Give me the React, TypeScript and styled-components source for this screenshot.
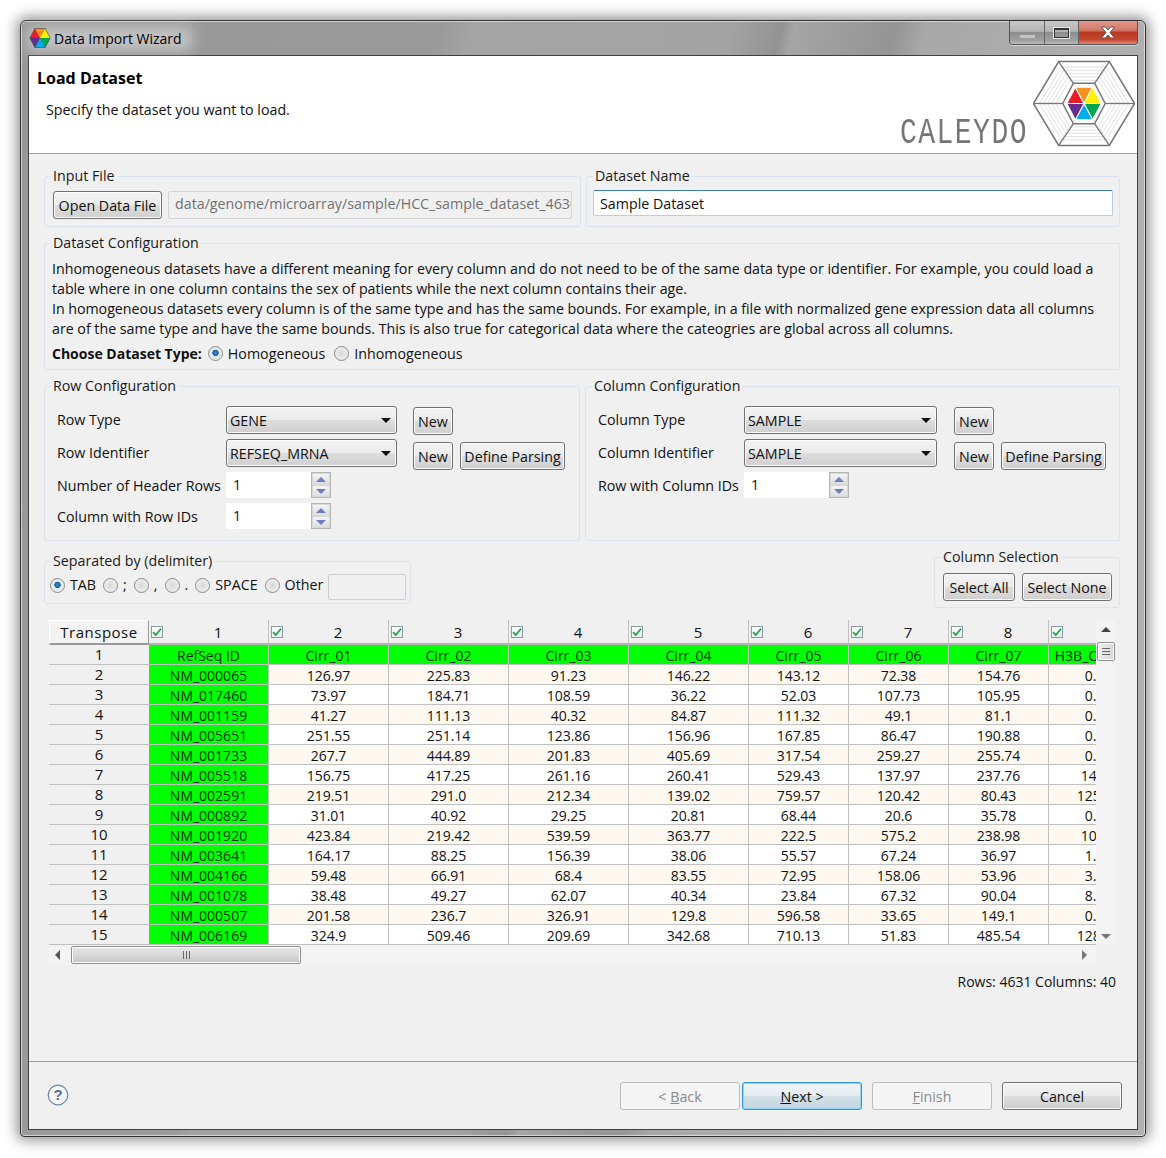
import React from "react";
import styled, { createGlobalStyle } from "styled-components";

const GlobalStyle = createGlobalStyle`
  body {
    margin: 0;
    background: #fff;
    font-family: "Open Sans", "Noto Sans", sans-serif;
    font-size: 14.25px;
    color: #111;
  }
`;

const columns = ["RefSeq ID", "Cirr_01", "Cirr_02", "Cirr_03", "Cirr_04", "Cirr_05", "Cirr_06", "Cirr_07", "H3B_Cirr_012"];

const rows = [
  ["NM_000065", "126.97", "225.83", "91.23", "146.22", "143.12", "72.38", "154.76", "0.17"],
  ["NM_017460", "73.97", "184.71", "108.59", "36.22", "52.03", "107.73", "105.95", "0.26"],
  ["NM_001159", "41.27", "111.13", "40.32", "84.87", "111.32", "49.1", "81.1", "0.31"],
  ["NM_005651", "251.55", "251.14", "123.86", "156.96", "167.85", "86.47", "190.88", "0.52"],
  ["NM_001733", "267.7", "444.89", "201.83", "405.69", "317.54", "259.27", "255.74", "0.48"],
  ["NM_005518", "156.75", "417.25", "261.16", "260.41", "529.43", "137.97", "237.76", "14.38"],
  ["NM_002591", "219.51", "291.0", "212.34", "139.02", "759.57", "120.42", "80.43", "125.38"],
  ["NM_000892", "31.01", "40.92", "29.25", "20.81", "68.44", "20.6", "35.78", "0.71"],
  ["NM_001920", "423.84", "219.42", "539.59", "363.77", "222.5", "575.2", "238.98", "10.62"],
  ["NM_003641", "164.17", "88.25", "156.39", "38.06", "55.57", "67.24", "36.97", "1.20"],
  ["NM_004166", "59.48", "66.91", "68.4", "83.55", "72.95", "158.06", "53.96", "3.90"],
  ["NM_001078", "38.48", "49.27", "62.07", "40.34", "23.84", "67.32", "90.04", "8.14"],
  ["NM_000507", "201.58", "236.7", "326.91", "129.8", "596.58", "33.65", "149.1", "0.63"],
  ["NM_006169", "324.9", "509.46", "209.69", "342.68", "710.13", "51.83", "485.54", "128.04"],
];

const hexPoints = (cx: number, cy: number, rx: number, ry: number) =>
  [
    [cx - rx, cy],
    [cx - rx / 2, cy - ry],
    [cx + rx / 2, cy - ry],
    [cx + rx, cy],
    [cx + rx / 2, cy + ry],
    [cx - rx / 2, cy + ry],
  ]
    .map((p) => p.join(","))
    .join(" ");

const HexLogo: React.FC<{ small?: boolean }> = ({ small }) => {
  const colors = ["#ed1c24", "#f7941d", "#fff200", "#00a651", "#00aeef", "#662d91"];
  const cx = 50;
  const cy = 43;
  const core = [
    [cx - 17, cy],
    [cx - 8.5, cy - 16],
    [cx + 8.5, cy - 16],
    [cx + 17, cy],
    [cx + 8.5, cy + 16],
    [cx - 8.5, cy + 16],
  ];
  if (small) {
    return (
      <svg width="22" height="20" viewBox="30 24 40 38">
        <polygon points={hexPoints(cx, cy, 20, 19)} fill="#555" />
        {colors.map((c, i) => (
          <polygon
            key={c}
            points={`${cx},${cy} ${core[i].map((v, k) => (v - (k ? cy : cx)) * 1.1 + (k ? cy : cx)).join(",")} ${core[(i + 1) % 6]
              .map((v, k) => (v - (k ? cy : cx)) * 1.1 + (k ? cy : cx))
              .join(",")}`}
            fill={c}
          />
        ))}
      </svg>
    );
  }
  return (
    <svg width="102" height="87" viewBox="0 0 100 86">
      {[28, 32, 36, 40, 44].map((r) => (
        <polygon key={r} points={hexPoints(cx, cy, r, r * 0.82)} fill="none" stroke="#dcdcdc" strokeWidth="0.9" />
      ))}
      <polygon points={hexPoints(cx, cy, 50, 41.5)} fill="none" stroke="#767676" strokeWidth="1.5" />
      <polygon points={hexPoints(cx, cy, 21, 20)} fill="#fff" stroke="#767676" strokeWidth="1.5" />
      <line x1={cx - 50} y1={cy} x2={cx - 21} y2={cy} stroke="#767676" strokeWidth="1.3" />
      <line x1={cx + 21} y1={cy} x2={cx + 50} y2={cy} stroke="#767676" strokeWidth="1.3" />
      <line x1={cx - 25} y1={cy - 41.5} x2={cx - 10.5} y2={cy - 20} stroke="#767676" strokeWidth="1.3" />
      <line x1={cx + 25} y1={cy - 41.5} x2={cx + 10.5} y2={cy - 20} stroke="#767676" strokeWidth="1.3" />
      <line x1={cx - 25} y1={cy + 41.5} x2={cx - 10.5} y2={cy + 20} stroke="#767676" strokeWidth="1.3" />
      <line x1={cx + 25} y1={cy + 41.5} x2={cx + 10.5} y2={cy + 20} stroke="#767676" strokeWidth="1.3" />
      {colors.map((c, i) => (
        <polygon
          key={c}
          points={`${cx},${cy} ${core[i].join(",")} ${core[(i + 1) % 6].join(",")}`}
          fill={c}
          stroke="#fff"
          strokeWidth="1"
        />
      ))}
    </svg>
  );
};

const Check = () => (
  <CheckBox>
    <svg width="10" height="10" viewBox="0 0 10 10">
      <path d="M1 5.2 L3.8 8 L9 1.8" fill="none" stroke="#1c9a3c" strokeWidth="1.6" />
    </svg>
  </CheckBox>
);

const Spinner: React.FC<{ value: string }> = ({ value }) => (
  <SpinBox>
    <SpinValue>{value}</SpinValue>
    <SpinButtons>
      <SpinButton>
        <ArrowUp />
      </SpinButton>
      <SpinButton>
        <ArrowDown />
      </SpinButton>
    </SpinButtons>
  </SpinBox>
);

const Radio: React.FC<{ checked?: boolean; label: string }> = ({ checked, label }) => (
  <RadioItem>
    <RadioDot $checked={checked} />
    {label}
  </RadioItem>
);

const App: React.FC = () => {
  return (
    <>
      <GlobalStyle />
      <Page>
        <Win>
          <TitleBar>
            <TitleLeft>
              <HexLogo small />
              <TitleText>Data Import Wizard</TitleText>
            </TitleLeft>
            <Controls>
              <CtrlMin>
                <MinBar />
              </CtrlMin>
              <CtrlMax>
                <MaxBox />
              </CtrlMax>
              <CtrlClose>
                <svg width="16" height="13" viewBox="0 0 16 13">
                  <path
                    d="M1.5 1 H5.5 L8 4 L10.5 1 H14.5 L10 6.5 L14.5 12 H10.5 L8 9 L5.5 12 H1.5 L6 6.5 Z"
                    fill="#fff"
                    stroke="#555"
                    strokeWidth="1"
                  />
                </svg>
              </CtrlClose>
            </Controls>
          </TitleBar>

          <Content>
            <Header>
              <HeaderText>
                <HeaderTitle>Load Dataset</HeaderTitle>
                <HeaderDesc>Specify the dataset you want to load.</HeaderDesc>
              </HeaderText>
              <LogoGroup>
                <LogoWord>CALEYDO</LogoWord>
                <HexLogo />
              </LogoGroup>
            </Header>

            <Main>
              <TwoCols $left={537}>
                <Group $height={60}>
                  <Legend>Input File</Legend>
                  <InputFileRow>
                    <Button $w={109}>Open Data File</Button>
                    <DisabledInput>data/genome/microarray/sample/HCC_sample_dataset_4630</DisabledInput>
                  </InputFileRow>
                </Group>
                <Group $height={60}>
                  <Legend>Dataset Name</Legend>
                  <NameRow>
                    <NameInput>Sample Dataset</NameInput>
                  </NameRow>
                </Group>
              </TwoCols>

              <ConfigGroup>
                <Legend>Dataset Configuration</Legend>
                <ConfigText>
                  <Line>
                    Inhomogeneous datasets have a different meaning for every column and do not need to be of the same data type or identifier. For example, you could load a
                  </Line>
                  <Line $ls={-0.05}>table where in one column contains the sex of patients while the next column contains their age.</Line>
                  <Line $ls={-0.05}>
                    In homogeneous datasets every column is of the same type and has the same bounds. For example, in a file with normalized gene expression data all columns
                  </Line>
                  <Line $ls={-0.02}>
                    are of the same type and have the same bounds. This is also true for categorical data where the cateogries are global across all columns.
                  </Line>
                  <TypeRow>
                    <strong>Choose Dataset Type:</strong>
                    <Radio checked label="Homogeneous" />
                    <Radio label="Inhomogeneous" />
                  </TypeRow>
                </ConfigText>
              </ConfigGroup>

              <ConfigCols>
                <Group $height={164}>
                  <Legend>Row Configuration</Legend>
                  <ConfigBody>
                    <FormRow $h={33}>
                      <FormLabel $w={169}>Row Type</FormLabel>
                      <Combo $w={171}>
                        GENE
                        <ComboArrow />
                      </Combo>
                      <NewSlot $top={1} $ml={16}>
                        <Button $w={40}>New</Button>
                      </NewSlot>
                    </FormRow>
                    <FormRow $h={33}>
                      <FormLabel $w={169}>Row Identifier</FormLabel>
                      <Combo $w={171}>
                        REFSEQ_MRNA
                        <ComboArrow />
                      </Combo>
                      <NewSlot $top={3} $ml={16}>
                        <Button $w={40}>New</Button>
                        <Button $w={105}>Define Parsing</Button>
                      </NewSlot>
                    </FormRow>
                    <FormRow $h={31}>
                      <FormLabel $w={169}>Number of Header Rows</FormLabel>
                      <Spinner value="1" />
                    </FormRow>
                    <FormRow $h={31}>
                      <FormLabel $w={169}>Column with Row IDs</FormLabel>
                      <Spinner value="1" />
                    </FormRow>
                  </ConfigBody>
                </Group>
                <Group $height={164}>
                  <Legend>Column Configuration</Legend>
                  <ConfigBody>
                    <FormRow $h={33}>
                      <FormLabel $w={146}>Column Type</FormLabel>
                      <Combo $w={193}>
                        SAMPLE
                        <ComboArrow />
                      </Combo>
                      <NewSlot $top={1} $ml={17}>
                        <Button $w={40}>New</Button>
                      </NewSlot>
                    </FormRow>
                    <FormRow $h={33}>
                      <FormLabel $w={146}>Column Identifier</FormLabel>
                      <Combo $w={193}>
                        SAMPLE
                        <ComboArrow />
                      </Combo>
                      <NewSlot $top={3} $ml={17}>
                        <Button $w={40}>New</Button>
                        <Button $w={105}>Define Parsing</Button>
                      </NewSlot>
                    </FormRow>
                    <FormRow $h={31}>
                      <FormLabel $w={146}>Row with Column IDs</FormLabel>
                      <Spinner value="1" />
                    </FormRow>
                  </ConfigBody>
                </Group>
              </ConfigCols>

              <OptionsRow>
                <SeparatedGroup>
                  <Legend>Separated by (delimiter)</Legend>
                  <DelimiterRow>
                    <Radio checked label="TAB" />
                    <Radio label=";" />
                    <Radio label="," />
                    <Radio label="." />
                    <Radio label="SPACE" />
                    <Radio label="Other" />
                    <OtherInput />
                  </DelimiterRow>
                </SeparatedGroup>
                <SelectionGroup>
                  <Legend>Column Selection</Legend>
                  <SelectionRow>
                    <Button $w={72}>Select All</Button>
                    <Button $w={90}>Select None</Button>
                  </SelectionRow>
                </SelectionGroup>
              </OptionsRow>

              <TableWrap>
                <TableClip>
                  <TableGrid>
                    <Corner>Transpose</Corner>
                    {columns.map((_, i) => (
                      <ColHead key={i}>
                        <Check />
                        <ColNumber>{i + 1}</ColNumber>
                      </ColHead>
                    ))}
                    <RowHead>1</RowHead>
                    {columns.map((c) => (
                      <Cell key={c} $green>
                        {c}
                      </Cell>
                    ))}
                    {rows.map((row, r) => (
                      <React.Fragment key={row[0]}>
                        <RowHead>{r + 2}</RowHead>
                        {row.map((v, c) => (
                          <Cell key={c} $green={c === 0} $alt={r % 2 === 0}>
                            {v}
                          </Cell>
                        ))}
                      </React.Fragment>
                    ))}
                  </TableGrid>
                </TableClip>
                <VScroll>
                  <ArrowUpDark />
                  <VThumb>
                    <GripLine />
                    <GripLine />
                    <GripLine />
                  </VThumb>
                  <VSpacer />
                  <ArrowDownDark />
                </VScroll>
                <HScroll>
                  <ArrowLeftDark />
                  <HThumb>
                    <VGripLine />
                    <VGripLine />
                    <VGripLine />
                  </HThumb>
                  <VSpacer />
                  <ArrowRightDark />
                </HScroll>
              </TableWrap>

              <Status>Rows: 4631 Columns: 40</Status>
            </Main>

            <Footer>
              <HelpIcon>
                <svg width="22" height="22" viewBox="0 0 22 22">
                  <circle cx="11" cy="11" r="9.8" fill="#f6f7f9" stroke="#6b83a5" strokeWidth="1.2" />
                  <text x="11" y="16" textAnchor="middle" fontFamily="Liberation Sans" fontWeight="bold" fontSize="15" fill="#566e92">
                    ?
                  </text>
                </svg>
              </HelpIcon>
              <WizardButtons>
                <WizardButton $disabled>
                  &lt; <u>B</u>ack
                </WizardButton>
                <WizardButton $primary>
                  <u>N</u>ext &gt;
                </WizardButton>
                <WizardButton $disabled $ml={8}>
                  <u>F</u>inish
                </WizardButton>
                <WizardButton $ml={8}>Cancel</WizardButton>
              </WizardButtons>
            </Footer>
          </Content>
        </Win>
      </Page>
    </>
  );
};

const Page = styled.div`
  padding: 20px;
  height: 1158px;
  box-sizing: border-box;
  overflow: hidden;
`;

const Win = styled.div`
  width: 1126px;
  height: 1117px;
  box-sizing: border-box;
  display: flex;
  flex-direction: column;
  padding: 0 7px 6px;
  border: 1px solid #303030;
  border-radius: 6px 6px 4px 4px;
  background: linear-gradient(
    104deg,
    #989898 0,
    #9a9a9a 410px,
    #a4a4a4 440px,
    #a3a3a3 690px,
    #939393 740px,
    #a5a5a5 752px,
    #949494 850px,
    #a8a8a8 880px,
    #b0b0b0 1126px
  );
  box-shadow: 0 0 14px 3px rgba(0, 0, 0, 0.45), inset 0 0 0 1px rgba(255, 255, 255, 0.55);
`;

const TitleBar = styled.div`
  height: 34px;
  flex: none;
  display: flex;
  justify-content: space-between;
  align-items: flex-start;
`;

const TitleLeft = styled.div`
  display: flex;
  align-items: center;
  gap: 3px;
  height: 34px;
  margin-left: 1px;
  position: relative;
  &::before {
    content: "";
    position: absolute;
    left: -2px;
    right: -10px;
    top: 5px;
    bottom: 4px;
    background: rgba(255, 255, 255, 0.42);
    filter: blur(7px);
  }
  & > * {
    position: relative;
  }
`;

const TitleText = styled.span`
  font-size: 14px;
  color: #000;
`;

const Controls = styled.div`
  display: flex;
  height: 23px;
  border: 1px solid #555;
  border-top: none;
  border-radius: 0 0 4px 4px;
  overflow: hidden;
  box-shadow: 0 1px 0 rgba(255, 255, 255, 0.5);
`;

const CtrlMin = styled.div`
  width: 34px;
  display: flex;
  align-items: center;
  justify-content: center;
  border-right: 1px solid #666;
  background: linear-gradient(#c8c8c8, #b4b4b4 45%, #8e8e8e 50%, #a0a0a0 85%, #bbb);
`;

const MinBar = styled.div`
  width: 15px;
  height: 3px;
  margin-top: 7px;
  background: #c4c4c4;
`;

const CtrlMax = styled(CtrlMin)`
  width: 33px;
`;

const MaxBox = styled.div`
  width: 13px;
  height: 7px;
  background: transparent;
  border: 1px solid #333;
  border-top-width: 2px;
  outline: 1px solid #e8e8e8;
`;

const CtrlClose = styled.div`
  width: 58px;
  display: flex;
  align-items: center;
  justify-content: center;
  background: linear-gradient(#e3968a, #d1796a 40%, #b93a22 50%, #c5452c 80%, #dd8a78);
`;

const Content = styled.div`
  flex: 1;
  min-height: 0;
  display: flex;
  flex-direction: column;
  border: 1px solid #404040;
  background: #f0f0f0;
`;

const Header = styled.div`
  height: 98px;
  flex: none;
  box-sizing: border-box;
  background: #fff;
  border-bottom: 1px solid #a0a0a0;
  display: flex;
  justify-content: space-between;
  padding: 0 2px 0 8px;
`;

const HeaderText = styled.div`
  display: flex;
  flex-direction: column;
`;

const HeaderTitle = styled.div`
  font-weight: 700;
  font-size: 16px;
  line-height: 22px;
  margin-top: 11px;
  color: #000;
`;

const HeaderDesc = styled.div`
  line-height: 20px;
  margin: 11px 0 0 9px;
`;

const LogoGroup = styled.div`
  display: flex;
  align-items: flex-end;
  padding-bottom: 6px;
`;

const LogoWord = styled.span`
  display: inline-block;
  font-family: "Liberation Mono", monospace;
  font-size: 28px;
  line-height: 24px;
  letter-spacing: 1.5px;
  color: #757575;
  margin: 0 5px -2px 0;
  transform: scaleY(1.3);
  transform-origin: center bottom;
`;

const Main = styled.div`
  flex: 1;
  min-height: 0;
  padding: 13px 17px 0 15px;
`;

const TwoCols = styled.div<{ $left: number }>`
  display: grid;
  grid-template-columns: ${({ $left }) => $left}px 1fr;
  column-gap: 5px;
`;

const Group = styled.fieldset<{ $height: number }>`
  margin: 0;
  padding: 0;
  min-width: 0;
  box-sizing: border-box;
  height: ${({ $height }) => $height}px;
  border: 1px solid #dbe4ee;
  border-radius: 3px;
`;

const Legend = styled.legend`
  margin-left: 6px;
  padding: 0 2px;
  line-height: 18px;
  color: #1a1a1a;
`;

const InputFileRow = styled.div`
  display: flex;
  gap: 6px;
  padding: 6px 0 0 8px;
`;

const Button = styled.div<{ $w: number }>`
  width: ${({ $w }) => $w}px;
  height: 28px;
  flex: none;
  box-sizing: border-box;
  display: flex;
  align-items: center;
  justify-content: center;
  white-space: nowrap;
  border: 1px solid #707070;
  border-radius: 3px;
  box-shadow: inset 0 0 0 1px #fbfbfb;
  background: linear-gradient(#f3f3f3, #ebebeb 48%, #dddddd 52%, #cfcfcf);
`;

const DisabledInput = styled.div`
  width: 404px;
  height: 28px;
  box-sizing: border-box;
  border: 1px solid #d5d5d5;
  border-radius: 2px;
  padding: 0 2px 0 6px;
  line-height: 24px;
  color: #707070;
  overflow: hidden;
  white-space: nowrap;
`;

const NameRow = styled.div`
  padding: 5px 6px 0 6px;
`;

const NameInput = styled.div`
  height: 26px;
  box-sizing: border-box;
  background: #fff;
  border: 1px solid #b5cfe7;
  border-top-color: #3d7bad;
  border-radius: 2px;
  padding-left: 6px;
  line-height: 25px;
`;

const ConfigGroup = styled(Group).attrs({ $height: 136 })`
  margin-top: 7px;
`;

const ConfigText = styled.div`
  padding: 7px 7px 0;
`;

const Line = styled.div<{ $ls?: number }>`
  line-height: 20px;
  white-space: nowrap;
  letter-spacing: ${({ $ls }) => $ls ?? 0}px;
`;

const TypeRow = styled.div`
  display: flex;
  align-items: center;
  gap: 9px;
  margin-top: 4px;
  height: 20px;
  & > strong {
    font-weight: 700;
    font-size: 14px;
    margin-right: -3px;
  }
`;

const RadioItem = styled.span`
  display: inline-flex;
  align-items: center;
  gap: 5px;
  white-space: nowrap;
`;

const RadioDot = styled.span<{ $checked?: boolean }>`
  width: 15px;
  height: 15px;
  flex: none;
  box-sizing: border-box;
  border-radius: 50%;
  border: 1px solid #8a8a8a;
  background: ${({ $checked }) =>
    $checked
      ? "radial-gradient(circle at 50% 45%, #3a8fd0 0, #1b5f9f 30%, #dfe8f0 36%, #f4f4f4 100%)"
      : "radial-gradient(circle, #d8d8d8 0, #e6e6e6 45%, #f6f6f6 100%)"};
`;

const ConfigCols = styled.div`
  display: grid;
  grid-template-columns: 536px 1fr;
  column-gap: 5px;
  margin-top: 7px;
`;

const ConfigBody = styled.div`
  padding: 11px 0 0 12px;
`;

const FormRow = styled.div<{ $h: number }>`
  height: ${({ $h }) => $h}px;
  display: flex;
  align-items: flex-start;
`;

const FormLabel = styled.div<{ $w: number }>`
  width: ${({ $w }) => $w}px;
  flex: none;
  line-height: 28px;
  white-space: nowrap;
`;

const Combo = styled.div<{ $w: number }>`
  width: ${({ $w }) => $w}px;
  height: 28px;
  flex: none;
  box-sizing: border-box;
  display: flex;
  align-items: center;
  justify-content: space-between;
  padding: 0 5px 0 3px;
  border: 1px solid #707070;
  border-radius: 3px;
  box-shadow: inset 0 0 0 1px #fbfbfb;
  background: linear-gradient(#f3f3f3, #ebebeb 48%, #dddddd 52%, #cfcfcf);
`;

const ComboArrow = styled.span`
  width: 0;
  height: 0;
  border-left: 5px solid transparent;
  border-right: 5px solid transparent;
  border-top: 5px solid #111;
`;

const NewSlot = styled.div<{ $top: number; $ml: number }>`
  display: flex;
  gap: 7px;
  margin: ${({ $top }) => $top}px 0 0 ${({ $ml }) => $ml}px;
`;

const SpinBox = styled.div`
  width: 105px;
  height: 26px;
  display: flex;
  background: #fff;
`;

const SpinValue = styled.div`
  flex: 1;
  padding-left: 7px;
  line-height: 26px;
`;

const SpinButtons = styled.div`
  width: 20px;
  box-sizing: border-box;
  border: 1px solid #b4b4b4;
  display: flex;
  flex-direction: column;
  background: #d8d8d8;
  gap: 2px;
  padding: 1px;
`;

const SpinButton = styled.div`
  flex: 1;
  display: flex;
  align-items: center;
  justify-content: center;
  background: linear-gradient(#f4f4f4, #dedede);
`;

const ArrowUp = styled.span`
  width: 0;
  height: 0;
  border-left: 5px solid transparent;
  border-right: 5px solid transparent;
  border-bottom: 5px solid #6d7fc0;
`;

const ArrowDown = styled.span`
  width: 0;
  height: 0;
  border-left: 5px solid transparent;
  border-right: 5px solid transparent;
  border-top: 5px solid #6d7fc0;
`;

const OptionsRow = styled.div`
  display: flex;
  justify-content: space-between;
  align-items: center;
  margin-top: 7px;
  height: 60px;
`;

const SeparatedGroup = styled(Group).attrs({ $height: 52 })`
  width: 367px;
`;

const DelimiterRow = styled.div`
  display: flex;
  align-items: flex-start;
  gap: 7px;
  height: 26px;
  line-height: 22px;
  padding: 4px 0 0 5px;
`;

const OtherInput = styled.div`
  width: 78px;
  height: 26px;
  margin-left: -2px;
  box-sizing: border-box;
  border: 1px solid #cfcfcf;
  border-radius: 2px;
`;

const SelectionGroup = styled(Group).attrs({ $height: 60 })`
  width: 186px;
`;

const SelectionRow = styled.div`
  display: flex;
  gap: 7px;
  padding: 7px 0 0 8px;
`;

const TableWrap = styled.div`
  display: grid;
  grid-template-columns: 1047px 19px;
  grid-template-rows: 325px 20px;
  margin: 12px 0 0 5px;
`;

const TableClip = styled.div`
  overflow: hidden;
`;

const TableGrid = styled.div`
  display: grid;
  width: 1100px;
  grid-template-columns: 100px repeat(5, 120px) repeat(4, 100px);
  grid-template-rows: 25px repeat(15, 20px);
  font-size: 14px;
`;

const Corner = styled.div`
  box-sizing: border-box;
  display: flex;
  align-items: center;
  justify-content: center;
  font-size: 15px;
  letter-spacing: 0.5px;
  background: #f3f3f3;
  border-top: 1px solid #fff;
  border-left: 1px solid #fff;
  border-right: 1px solid #9a9a9a;
  border-bottom: 2px solid #9a9a9a;
`;

const ColHead = styled.div`
  box-sizing: border-box;
  display: flex;
  align-items: center;
  padding-left: 2px;
  border-right: 1px solid #c0c0c0;
  border-bottom: 2px solid #b4b4b4;
`;

const ColNumber = styled.span`
  flex: 1;
  text-align: center;
  font-size: 15px;
  padding-left: 5px;
`;

const CheckBox = styled.span`
  width: 12px;
  height: 12px;
  box-sizing: border-box;
  flex: none;
  display: flex;
  align-items: center;
  justify-content: center;
  background: linear-gradient(#fff, #e6ecf2);
  border: 1px solid #8b9aa8;
`;

const RowHead = styled.div`
  box-sizing: border-box;
  text-align: center;
  line-height: 19px;
  font-size: 15px;
  border-bottom: 1px solid #c0c0c0;
`;

const Cell = styled.div<{ $green?: boolean; $alt?: boolean }>`
  box-sizing: border-box;
  text-align: center;
  line-height: 21px;
  white-space: nowrap;
  overflow: hidden;
  border-right: 1px solid #c0c0c0;
  border-bottom: 1px solid #c0c0c0;
  color: ${({ $green }) => ($green ? "#063006" : "#111")};
  background: ${({ $green, $alt }) => ($green ? "#00ff00" : $alt ? "#fdf9f1" : "#fff")};
`;

const VScroll = styled.div`
  display: flex;
  flex-direction: column;
  align-items: center;
  background: #f3f3f3;
  padding: 7px 0 6px;
`;

const VThumb = styled.div`
  width: 18px;
  height: 19px;
  margin-top: 10px;
  box-sizing: border-box;
  display: flex;
  flex-direction: column;
  align-items: center;
  justify-content: center;
  gap: 2px;
  border: 1px solid #8e8e8e;
  border-radius: 2px;
  box-shadow: inset 0 0 0 1px #fff;
  background: linear-gradient(90deg, #efefef, #d6d6d6);
`;

const GripLine = styled.span`
  width: 8px;
  height: 1px;
  background: #666;
`;

const VSpacer = styled.div`
  flex: 1;
`;

const ArrowUpDark = styled.span`
  width: 0;
  height: 0;
  border-left: 5px solid transparent;
  border-right: 5px solid transparent;
  border-bottom: 5px solid #444;
`;

const ArrowDownDark = styled.span`
  width: 0;
  height: 0;
  border-left: 5px solid transparent;
  border-right: 5px solid transparent;
  border-top: 5px solid #777;
`;

const HScroll = styled.div`
  display: flex;
  align-items: center;
  background: #f3f3f3;
  padding: 0 9px 0 6px;
`;

const HThumb = styled.div`
  width: 230px;
  height: 18px;
  margin-left: 11px;
  box-sizing: border-box;
  display: flex;
  align-items: center;
  justify-content: center;
  gap: 2px;
  border: 1px solid #8e8e8e;
  border-radius: 2px;
  box-shadow: inset 0 0 0 1px #fff;
  background: linear-gradient(#e6e6e6, #dadada 50%, #c4c4c4);
`;

const VGripLine = styled.span`
  width: 1px;
  height: 8px;
  background: #666;
`;

const ArrowLeftDark = styled.span`
  width: 0;
  height: 0;
  border-top: 5px solid transparent;
  border-bottom: 5px solid transparent;
  border-right: 5px solid #555;
`;

const ArrowRightDark = styled.span`
  width: 0;
  height: 0;
  border-top: 5px solid transparent;
  border-bottom: 5px solid transparent;
  border-left: 5px solid #777;
`;

const Status = styled.div`
  margin-top: 8px;
  text-align: right;
  font-size: 14px;
  line-height: 18px;
  padding-right: 4px;
`;

const Footer = styled.div`
  height: 68px;
  flex: none;
  box-sizing: border-box;
  border-top: 1px solid #a0a0a0;
  display: flex;
  justify-content: space-between;
  padding: 20px 15px 0 18px;
`;

const HelpIcon = styled.div`
  height: 22px;
  margin-top: 2px;
`;

const WizardButtons = styled.div`
  display: flex;
  gap: 2px;
`;

const WizardButton = styled.div<{ $disabled?: boolean; $primary?: boolean; $ml?: number }>`
  width: 120px;
  height: 28px;
  box-sizing: border-box;
  display: flex;
  align-items: center;
  justify-content: center;
  white-space: pre;
  margin-left: ${({ $ml }) => $ml ?? 0}px;
  border-radius: 3px;
  border: 1px solid ${({ $disabled, $primary }) => ($disabled ? "#bcbcbc" : $primary ? "#2a9ad6" : "#707070")};
  color: ${({ $disabled }) => ($disabled ? "#8a8a8a" : "#111")};
  box-shadow: ${({ $disabled, $primary }) =>
    $disabled ? "none" : $primary ? "inset 0 0 0 1px #8fd3f4" : "inset 0 0 0 1px #fbfbfb"};
  background: ${({ $disabled, $primary }) =>
    $disabled
      ? "#f4f4f4"
      : $primary
      ? "linear-gradient(#eef3f6, #e6edf2 48%, #d2e0e8 52%, #c6d6de)"
      : "linear-gradient(#f3f3f3, #ebebeb 48%, #dddddd 52%, #cfcfcf)"};
`;

export default App;
